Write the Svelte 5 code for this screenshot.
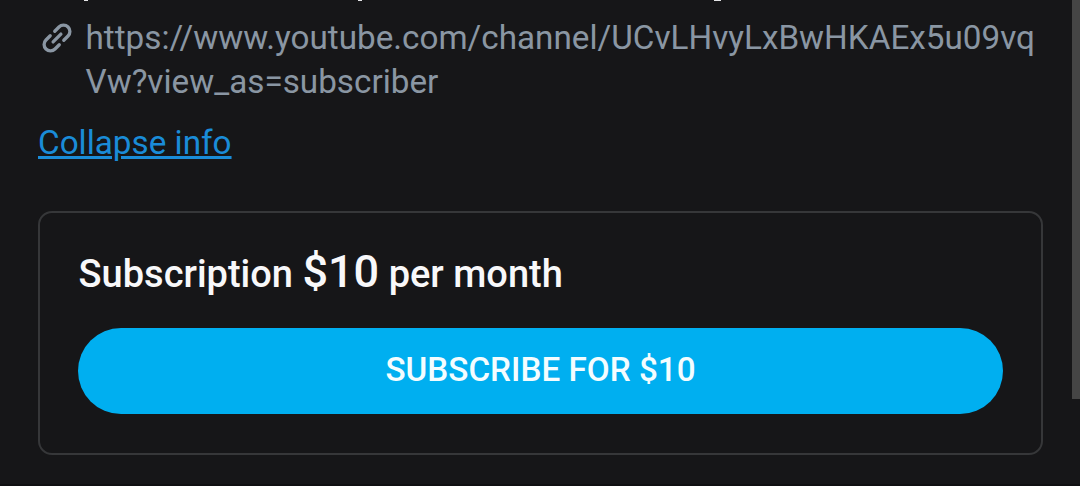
<script>
    let link = 'https://www.youtube.com/channel/UCvLHvyLxBwHKAEx5u09vqVw?view_as=subscriber';
    let price = 10;

    // left edge and width of every descender left over from the scrolled line
    let tails = [[84, 4], [358, 4], [714, 7]];
</script>

<div class="page">
    <main>
        <div class="scrolled">
            {#each tails as [x, w]}
                <i style="left: {x}px; width: {w}px"></i>
            {/each}
        </div>
        <div class="link">
            <svg width="38" height="38" viewBox="0 0 38 38" fill="none" stroke="#8a96a3" stroke-width="3.3" stroke-linecap="round">
                <g transform="translate(19 19) rotate(-45)">
                    <path d="M-3.2 -6.4H-9.2A6.4 6.4 0 0 0 -9.2 6.4H-3.2"/>
                    <path d="M3.2 -6.4H9.2A6.4 6.4 0 0 1 9.2 6.4H3.2"/>
                    <path d="M-5.5 0H5.5"/>
                </g>
            </svg>
            <span>{link}</span>
        </div>
        <button class="collapse">Collapse info</button>
        <section>
            <h2>Subscription <b>${price}</b> per month</h2>
            <button class="subscribe">SUBSCRIBE FOR ${price}</button>
        </section>
    </main>
    <div class="scrollbar"></div>
</div>

<style>
    :global(body){
        background-color: #161618;
    }
    .page{
        box-sizing: border-box;
        display: flex;
        justify-content: space-between;
        align-items: flex-start;
        height: 486px;
        overflow: hidden;
        font-family: Roboto, sans-serif;
        color: #f8f8fa;
        background-color: #161618;
        border-bottom: 2px solid #101012;
    }
    main{
        width: 1005px;
        padding-left: 38px;
    }
    .scrolled{
        height: 16px;
    }
    .scrolled i{
        position: absolute;
        top: 0;
        height: 1px;
        background-color: #e4e4e6;
    }
    .link{
        display: flex;
        gap: 9.5px;
        font-size: 33.25px;
        line-height: 44px;
        color: #8a96a3;
    }
    .link svg{
        flex: none;
        margin-top: 3px;
    }
    .link span{
        width: 957px;
        word-break: break-all;
    }
    button{
        display: block;
        padding: 0;
        border: none;
        font-family: inherit;
    }
    .collapse{
        margin-top: 17px;
        font-size: 33.25px;
        line-height: 44px;
        color: #1a8cd8;
        background: none;
        text-decoration: underline;
        text-decoration-thickness: 3px;
    }
    section{
        box-sizing: border-box;
        height: 244px;
        margin-top: 46px;
        padding: 33px 38px 0;
        border: 2px solid #363739;
        border-radius: 14px;
    }
    h2{
        margin: 0;
        padding-left: 0.6px;
        font-size: 38px;
        line-height: 52px;
        font-weight: 500;
    }
    h2 b{
        font-size: 45px;
        font-weight: 500;
    }
    .subscribe{
        width: 100%;
        height: 86px;
        margin-top: 28px;
        padding-bottom: 3px;
        border-radius: 43px;
        font-size: 33.25px;
        font-weight: 500;
        color: #f4fdff;
        background-color: #00aff0;
    }
    .scrollbar{
        width: 8px;
        height: 399px;
        background-color: #454545;
    }
</style>
